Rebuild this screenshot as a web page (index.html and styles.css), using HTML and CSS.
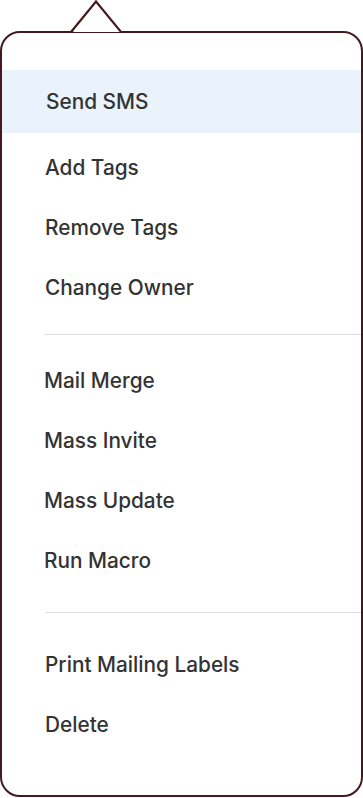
FILE: index.html
```html
<!DOCTYPE html>
<html>
<head>
<meta charset="utf-8">
<link rel="stylesheet" href="styles.css">
</head>
<body>
<div class="popover">
  <svg class="caret" width="52" height="36" viewBox="0 0 52 36">
    <polygon points="0,32 23,2 48,32" fill="#fff" stroke="none"/>
    <polyline points="-2,32 23,1.5 48,32 52,32" fill="none" stroke="#451a1e" stroke-width="2.2"/>
  </svg>
  <div class="menu">
    <div class="group first">
      <div class="item active">Send SMS</div>
      <div class="item">Add Tags</div>
      <div class="item">Remove Tags</div>
      <div class="item">Change Owner</div>
    </div>
    <div class="divider d1"></div>
    <div class="group second">
      <div class="item">Mail Merge</div>
      <div class="item">Mass Invite</div>
      <div class="item">Mass Update</div>
      <div class="item">Run Macro</div>
    </div>
    <div class="divider d2"></div>
    <div class="group third">
      <div class="item">Print Mailing Labels</div>
      <div class="item">Delete</div>
    </div>
  </div>
</div>
</body>
</html>
```

FILE: styles.css
```css
html, body {
  margin: 0;
  padding: 0;
  background: #fff;
}
body {
  font-family: Inter, "Noto Sans", sans-serif;
  color: #333;
}
.popover {
  position: relative;
  padding-top: 31px;
  width: 363px;
  height: 798px;
  box-sizing: border-box;
}
.caret {
  position: absolute;
  left: 73px;
  top: 0;
  overflow: visible;
}
.menu {
  height: 766px;
  box-sizing: border-box;
  border: 2px solid #451a1e;
  border-radius: 20px;
  padding-top: 37px;
  display: flex;
  flex-direction: column;
}
.item {
  height: 60px;
  display: flex;
  align-items: center;
  padding-left: 43px;
  font-size: 20.8px;
  font-weight: 500;
  letter-spacing: 0;
}
.item.active {
  height: 63px;
  margin-bottom: 4px;
  padding-left: 44px;
  background: #eaf2fc;
}
.second .item {
  padding-left: 42px;
}
.divider {
  height: 1px;
  background: #dcdcdc;
}
.d1 {
  margin: 17px 0 15px 42px;
}
.d2 {
  margin: 22px 0 21px 44px;
}
```
